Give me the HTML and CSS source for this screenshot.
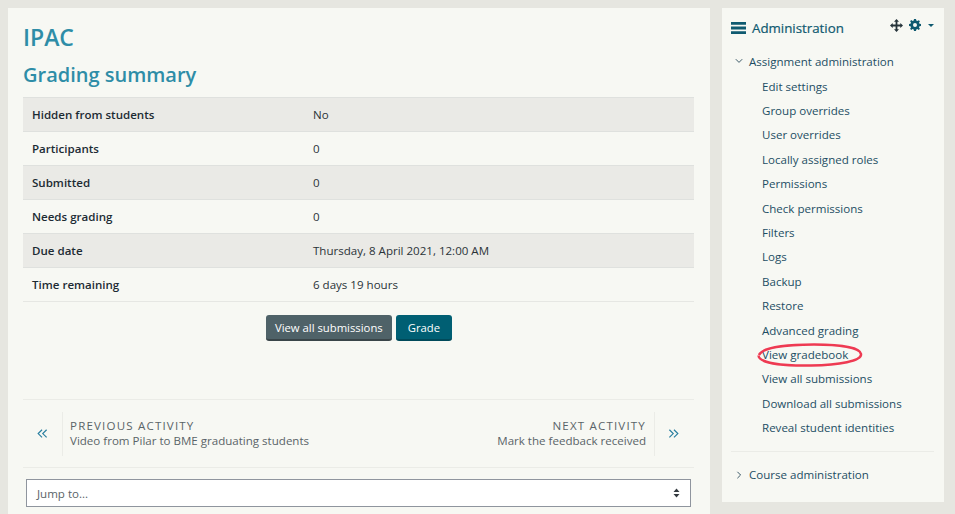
FILE: index.html
```html
<!DOCTYPE html>
<html lang="en">
<head>
<meta charset="utf-8">
<title>IPAC</title>
<link rel="stylesheet" href="styles.css">
</head>
<body>
<div class="page">
  <main class="main">
    <h1 class="title">IPAC</h1>
    <h2 class="subtitle">Grading summary</h2>
    <table class="summary">
      <tr><th>Hidden from students</th><td>No</td></tr>
      <tr><th>Participants</th><td>0</td></tr>
      <tr><th>Submitted</th><td>0</td></tr>
      <tr><th>Needs grading</th><td>0</td></tr>
      <tr><th>Due date</th><td>Thursday, 8 April 2021, 12:00 AM</td></tr>
      <tr><th>Time remaining</th><td>6 days 19 hours</td></tr>
    </table>
    <div class="actions">
      <a class="btn btn-grey">View all submissions</a>
      <a class="btn btn-teal">Grade</a>
    </div>
    <nav class="activity-nav">
      <a class="nav-arrow nav-arrow-prev">
        <svg class="chev" viewBox="0 0 12 10" width="11" height="9.200"><path d="M5.5 0.8 1.3 5l4.2 4.2M10.5 0.8 6.3 5l4.2 4.2"/></svg>
      </a>
      <div class="nav-text">
        <div class="nav-label">PREVIOUS ACTIVITY</div>
        <div class="nav-name">Video from Pilar to BME graduating students</div>
      </div>
      <div class="nav-text nav-text-right">
        <div class="nav-label">NEXT ACTIVITY</div>
        <div class="nav-name">Mark the feedback received</div>
      </div>
      <a class="nav-arrow nav-arrow-next">
        <svg class="chev" viewBox="0 0 12 10" width="11" height="9.200"><path d="M1.5 0.8 5.7 5 1.5 9.200M6.500 0.8 10.700 5 6.500 9.200"/></svg>
      </a>
    </nav>
    <div class="jump">
      <span>Jump to...</span>
      <svg class="updown" viewBox="0 0 7 10" width="7" height="10"><path d="M3.500 0.500 6.500 4H0.500ZM3.500 9.500 0.500 6H6.500Z"/></svg>
    </div>
  </main>
  <aside class="side">
    <header class="side-head">
      <svg class="burger" viewBox="0 0 15 12" width="15" height="12"><path d="M0 0h15v2.800H0zM0 4.600h15v2.800H0zM0 9.200h15V12H0z"/></svg>
      <span class="side-title">Administration</span>
      <div class="side-tools">
        <svg class="move" viewBox="0 0 13 13" width="13" height="13"><path d="M6.500 0 9 2.700H7.400v2.900h2.900V4L13 6.500 10.300 9V7.400H7.400v2.900H9L6.500 13 4 10.300h1.600V7.400H2.700V9L0 6.500 2.700 4v1.600h2.900V2.700H4Z"/></svg>
        <svg class="gear" viewBox="0 0 12 12" width="12" height="12"><path fill-rule="evenodd" d="M5 0h2l.3 1.600 1.100.5L9.800 1.200l1.100 1.100-.9 1.400.5 1.100L12 5v2l-1.500.3-.5 1.100.9 1.400-1.100 1.100-1.400-.9-1.100.5L7 12H5l-.3-1.500-1.100-.5-1.400.9-1.100-1.100.9-1.400-.5-1.100L0 7V5l1.500-.3.500-1.100-.9-1.400 1.100-1.100 1.400.9 1.100-.5ZM6 4a2 2 0 1 0 0 4 2 2 0 0 0 0-4Z"/></svg>
        <span class="caret"></span>
      </div>
    </header>
    <div class="tree-top">
      <svg class="tw" viewBox="0 0 8 8" width="8" height="8"><path d="M.8 2.200 4 5.400 7.200 2.200"/></svg>
      <span>Assignment administration</span>
    </div>
    <ul class="links">
      <li>Edit settings</li>
      <li>Group overrides</li>
      <li>User overrides</li>
      <li>Locally assigned roles</li>
      <li>Permissions</li>
      <li>Check permissions</li>
      <li>Filters</li>
      <li>Logs</li>
      <li>Backup</li>
      <li>Restore</li>
      <li>Advanced grading</li>
      <li class="circled">View gradebook
        <svg class="ring" viewBox="0 0 108 26" width="108" height="26"><path d="M3 13C6 6 28 2.500 58 2.500c25 0 46 3 47 9.500 1 7-22 11-50 11.500C26 24 3 21 2.500 13.500"/></svg>
      </li>
      <li>View all submissions</li>
      <li>Download all submissions</li>
      <li>Reveal student identities</li>
    </ul>
    <div class="tree-bottom">
      <svg class="tw" viewBox="0 0 8 8" width="8" height="8"><path d="M2.400.8 5.600 4 2.400 7.200"/></svg>
      <span>Course administration</span>
    </div>
  </aside>
</div>
</body>
</html>
```
FILE: styles.css
```css
* { box-sizing: border-box; }
html, body { margin: 0; height: 100%; overflow: hidden; }
body {
  background: #e6e6e0;
  font-family: "Open Sans", sans-serif;
  font-size: 11.550px;
  color: #1c2b33;
}
.page {
  display: flex;
  align-items: flex-start;
  gap: 12px;
  padding: 8px 11px 0 8px;
}
.main {
  flex: 0 0 702px;
  height: 520px;
  background: #f7f8f3;
  padding: 13px 16px 0 15px;
}
.title {
  margin: 0;
  font-size: 23px;
  line-height: 32px;
  font-weight: 600;
  color: #2e8da7;
}
.subtitle {
  margin: 9px 0 0;
  font-size: 20px;
  line-height: 26px;
  font-weight: 600;
  color: #2e8da7;
}
.summary {
  width: 100%;
  margin-top: 9px;
  border-collapse: collapse;
  table-layout: fixed;
}
.summary tr { height: 34px; border-top: 1px solid #dfe1de; }
.summary tr:nth-child(odd) { background: #eaeae6; }
.summary tr:last-child { border-bottom: 1px solid #e6e7e3; }
.summary th, .summary td { padding: 0 9px; font-size: 11.550px; text-align: left; }
.summary th { width: 281px; font-weight: 600; color: #1c2b33; }
.summary td { font-weight: 400; color: #2a3338; }
.actions {
  display: flex;
  justify-content: center;
  gap: 4px;
  margin-top: 13px;
  padding-left: 1px;
}
.btn {
  display: block;
  height: 26px;
  line-height: 25px;
  border-radius: 3px;
  color: #fff;
  font-size: 11.300px;
  font-weight: 400;
  padding: 0 9px;
  border-bottom: 2px solid;
}
.btn-grey { background: #4f6268; border-color: #3a4549; }
.btn-teal { background: #005f73; border-color: #004a5a; padding: 0 12px; }
.activity-nav {
  display: flex;
  align-items: center;
  margin-top: 58px;
  height: 69px;
  border-top: 1px solid #ebece7;
  border-bottom: 1px solid #ebece7;
}
.nav-arrow {
  display: flex;
  align-items: center;
  justify-content: center;
  height: 44px;
  width: 40px;
  flex: none;
}
.nav-arrow-prev { border-right: 1px solid #ebece7; padding-right: 1px; }
.nav-arrow-next { border-left: 1px solid #ebece7; padding-right: 3px; }
.chev { fill: none; stroke: #2a7fa0; stroke-width: 1.300; }
.nav-text { flex: 1; padding: 0 8px 0 7px; color: #5a6468; }
.nav-text-right { text-align: right; }
.nav-label { font-size: 11.550px; line-height: 15px; letter-spacing: 1.180px; }
.nav-name { font-size: 11.550px; line-height: 16px; }
.jump {
  display: flex;
  align-items: center;
  justify-content: space-between;
  margin: 11px 3px 0;
  height: 28px;
  background: #fff;
  border: 1px solid #8f959e;
  padding: 0 10px 0 10px;
  font-size: 11.550px;
  color: #5a6468;
}
.updown { fill: #343a40; }
.side {
  flex: 0 0 222px;
  height: 494px;
  background: #f7f8f3;
  padding: 0 10px 0 9px;
  color: #1d4e63;
}
.side-head {
  display: flex;
  align-items: center;
  height: 40px;
}
.burger { fill: #0f5a70; margin-right: 6px; flex: none; }
.side-title { font-size: 13.300px; font-weight: 400; color: #0f5a70; -webkit-text-stroke: 0.200px #0f5a70; }
.side-tools {
  display: flex;
  align-items: center;
  margin-left: auto;
  margin-top: -6px;
  gap: 6px;
}
.move { fill: #26343a; }
.gear { fill: #0f5a70; }
.caret {
  margin-left: 1px;
  width: 0;
  height: 0;
  border-left: 3.500px solid transparent;
  border-right: 3.500px solid transparent;
  border-top: 3.500px solid #0f5a70;
}
.tree-top, .tree-bottom {
  display: flex;
  align-items: center;
  gap: 6px;
  height: 24px;
  padding-left: 4px;
  font-size: 11.550px;
}
.tree-top { margin-top: 1px; margin-bottom: 1.700px; }
.tw { fill: none; stroke: #3c5a68; stroke-width: 1; flex: none; }
.links { list-style: none; margin: 0; padding: 0 0 0 31px; }
.links li {
  position: relative;
  height: 24.400px;
  line-height: 24.400px;
  font-size: 11.550px;
  white-space: nowrap;
}
.ring {
  position: absolute;
  left: -6px;
  top: -1px;
  fill: none;
  stroke: #ee3a52;
  stroke-width: 2.500;
}
.tree-bottom {
  border-top: 1px solid #ebece7;
  margin-top: 10.300px;
  height: 47px;
}
```
